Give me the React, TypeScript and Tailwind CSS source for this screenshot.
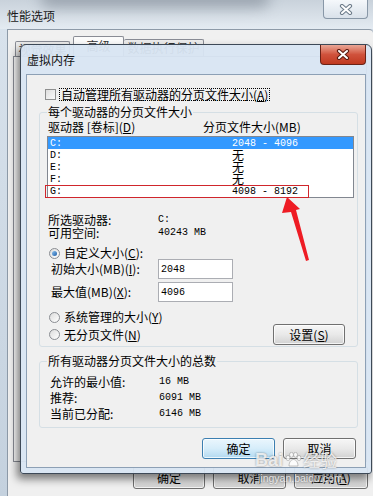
import React from 'react';

const mono = "font-['Liberation_Mono',monospace] text-[10px]";

const CloseX: React.FC<{ outline: string }> = ({ outline }) => (
  <svg width="14" height="11" viewBox="0 0 14 11">
    <path d="M3 2 L11 9 M11 2 L3 9" stroke={outline} strokeWidth="4.2" strokeLinecap="round" fill="none" />
    <path d="M3 2 L11 9 M11 2 L3 9" stroke="#ffffff" strokeWidth="2" strokeLinecap="round" fill="none" />
  </svg>
);

const Radio: React.FC<{ checked?: boolean }> = ({ checked }) => (
  <span className="w-[11px] h-[11px] rounded-full border border-[#8a8d92] bg-linear-to-br from-[#dcdcdc] to-[#ffffff] flex items-center justify-center shrink-0">
    {checked && <span className="w-[5px] h-[5px] rounded-full bg-linear-to-br from-[#8cc3f0] to-[#1c5ea8]" />}
  </span>
);

const Btn: React.FC<{ label: React.ReactNode; def?: boolean; className?: string }> = ({ label, def, className }) => (
  <div
    className={`flex items-center justify-center rounded-[3px] border shadow-[inset_0_0_0_1px_rgba(255,255,255,0.75)] ${
      def
        ? 'border-[#3c7fb1] bg-linear-to-b from-[#eaf6fd] via-[#d6edfa] to-[#b2d9f0]'
        : 'border-[#707070] bg-linear-to-b from-[#f6f6f6] via-[#e9e9e9] to-[#d2d2d2]'
    } ${className ?? ''}`}
  >
    <span className="leading-[12px]">{label}</span>
  </div>
);

const Group: React.FC<{ title: string; className?: string; children: React.ReactNode }> = ({ title, className, children }) => (
  <div className={`flex flex-col border border-[#d5dfe5] rounded-[3px] ${className ?? ''}`}>
    <span className="-mt-[7px] ml-[7px] px-[1px] self-start bg-[#f0f0f0] leading-[12px]">{title}</span>
    {children}
  </div>
);

const drives = [
  { d: 'C:', v: '2048 - 4096', sel: true },
  { d: 'D:', v: '无' },
  { d: 'E:', v: '无' },
  { d: 'F:', v: '无' },
  { d: 'G:', v: '4098 - 8192' },
];

export default function App() {
  return (
    <div className="relative w-[373px] h-[496px] overflow-hidden bg-[#d2dce7] text-[12px] text-black font-['Noto_Sans_CJK_SC',sans-serif]">
      {/* outer window: 性能选项 */}
      <div className="flex flex-col h-full">
        <div className="relative h-[29px] flex justify-between items-start bg-linear-to-b from-[#c9d2db] to-[#e4ebf2] overflow-hidden">
          <div className="absolute left-[40px] -top-[12px] w-[230px] h-[20px] rounded-full bg-[#7e8894] opacity-60 blur-[7px]" />
          <span className="relative mt-[9px] ml-[7px] text-[12px] leading-[13px] text-[#1a1a1a]">性能选项</span>
          <div className="relative mr-[5px] w-[45px] h-[19px] flex items-center justify-center rounded-b-[4px] border border-t-0 border-[#8897a7] bg-linear-to-b from-[#f5f8fb] to-[#d9e1ea]">
            <CloseX outline="#6f7d8c" />
          </div>
        </div>
        <div className="flex-1 flex">
          <div className="w-[7px] bg-linear-to-b from-[#d8e2ec] to-[#c4d1de]" />
          <div className="flex-1 flex flex-col bg-[#f0f0f0] border-l border-t border-[#8d9aa8] rounded-tr-[4px]">
            <div className="h-[26px] flex items-end pl-[7px] text-[#333]">
              <div className="w-[55px] h-[15px] pt-[2px] border border-b-0 border-[#898c95] rounded-t-[2px] bg-[#ececec] text-center leading-[11px]">视觉效果</div>
              <div className="ml-[3px] w-[51px] h-[20px] pt-[3px] border border-b-0 border-[#898c95] rounded-t-[2px] bg-[#fbfbfb] text-center leading-[11px]">高级</div>
              <div className="w-[80px] h-[17px] pt-[2px] border border-b-0 border-l-0 border-[#898c95] rounded-t-[2px] bg-[#ececec] text-center leading-[11px]">数据执行保护</div>
            </div>
            <div className="ml-[5px] mr-[6px] h-[406px] border border-[#898c95] bg-[#fafafa]" />
            <div className="mt-[4px] flex justify-end gap-[8px] pr-[5px]">
              <Btn label="确定" className="w-[72px] h-[23px]" />
              <Btn label="取消" className="w-[73px] h-[23px]" />
              <Btn label={<>应用(<u>A</u>)</>} className="w-[74px] h-[23px]" />
            </div>
          </div>
        </div>
      </div>

      {/* dialog: 虚拟内存 */}
      <div className="absolute left-[20px] top-[44px] w-[352px] h-[430px] flex flex-col rounded-t-[6px] rounded-b-[3px] border border-[#3d4957] bg-[#d8e5f2]/95 shadow-[-3px_5px_9px_rgba(0,0,0,0.5)]">
        <div className="h-[29px] flex justify-between items-start">
          <span className="mt-[8px] ml-[6px] text-[12px] leading-[13px] text-[#111]">虚拟内存</span>
          <div className="mr-[5px] w-[46px] h-[20px] flex items-center justify-center rounded-b-[4px] border border-t-0 border-[#6a2216] bg-linear-to-b from-[#e9a696] via-[#d0523c] to-[#c0391f]">
            <CloseX outline="#5a1c12" />
          </div>
        </div>
        <div className="mx-[5px] h-[394px] flex flex-col border border-[#8da0b5] bg-[#f0f0f0]">
          {/* checkbox */}
          <div className="mt-[13px] ml-[18px] h-[12px] flex items-center">
            <span className="w-[11px] h-[11px] border border-[#8e8f8f] bg-linear-to-br from-[#dedede] to-[#fafafa]" />
            <span className="ml-[3px] px-[1px] border border-dotted border-black leading-[11px]">
              自动管理所有驱动器的分页文件大小(<u>A</u>)
            </span>
          </div>

          <Group title="每个驱动器的分页文件大小" className="mt-[12px] ml-[12px] w-[319px] h-[235px]">
            <div className="mt-[3px] pl-[8px] flex leading-[12px]">
              <span className="w-[155px]">驱动器 [卷标](<u>D</u>)</span>
              <span>分页文件大小(MB)</span>
            </div>
            <div className="relative mt-[3px] ml-[7px] w-[307px] h-[62px] border border-[#828790] bg-white">
              {drives.map((r) => (
                <div
                  key={r.d}
                  className={`h-[12px] flex items-center pl-[2px] ${r.sel ? 'bg-[#3399ff] text-white' : ''}`}
                >
                  <span className={`w-[182px] ${mono}`}>{r.d}</span>
                  <span className={r.v === '无' ? 'leading-[12px]' : mono}>{r.v}</span>
                </div>
              ))}
              <div className="absolute -left-[3px] top-[48px] w-[264px] h-[13px] border border-[#d0262c]" />
            </div>

            <div className="mt-[16px] pl-[8px] flex leading-[12px]">
              <span className="w-[110px]">所选驱动器:</span>
              <span className={mono}>C:</span>
            </div>
            <div className="mt-[1px] pl-[8px] flex leading-[12px]">
              <span className="w-[110px]">可用空间:</span>
              <span className={mono}>40243 MB</span>
            </div>

            <div className="mt-[8px] pl-[9px] h-[12px] flex items-center">
              <Radio checked />
              <span className="ml-[4px] leading-[12px]">自定义大小(<u>C</u>):</span>
            </div>
            <div className="pl-[11px] h-[20px] flex items-center">
              <span className="w-[107px] leading-[12px]">初始大小(MB)(<u>I</u>):</span>
              <div className="w-[75px] h-[20px] flex items-center pl-[2px] border border-[#abadb3] bg-white">
                <span className={mono}>2048</span>
              </div>
            </div>
            <div className="mt-[3px] pl-[11px] h-[20px] flex items-center">
              <span className="w-[107px] leading-[12px]">最大值(MB)(<u>X</u>):</span>
              <div className="w-[75px] h-[20px] flex items-center pl-[2px] border border-[#abadb3] bg-white">
                <span className={mono}>4096</span>
              </div>
            </div>

            <div className="mt-[9px] pl-[9px] h-[12px] flex items-center">
              <Radio />
              <span className="ml-[4px] leading-[12px]">系统管理的大小(<u>Y</u>)</span>
            </div>
            <div className="mt-[1px] pl-[9px] pr-[12px] h-[21px] flex items-center">
              <Radio />
              <span className="ml-[4px] leading-[12px]">无分页文件(<u>N</u>)</span>
              <Btn label={<>设置(<u>S</u>)</>} className="ml-auto w-[72px] h-[21px]" />
            </div>
          </Group>

          <Group title="所有驱动器分页文件大小的总数" className="mt-[14px] ml-[12px] w-[319px] h-[67px]">
            {[
              ['允许的最小值:', '16 MB'],
              ['推荐:', '6091 MB'],
              ['当前已分配:', '6146 MB'],
            ].map(([k, v], i) => (
              <div key={k} className={`pl-[10px] flex leading-[12px] ${i === 0 ? 'mt-[9px]' : 'mt-[4px]'}`}>
                <span className="w-[109px]">{k}</span>
                <span className={mono}>{v}</span>
              </div>
            ))}
          </Group>

          <div className="mt-[10px] pr-[9px] flex justify-end gap-[8px]">
            <Btn label="确定" def className="w-[73px] h-[21px]" />
            <Btn label="取消" className="w-[73px] h-[21px]" />
          </div>
        </div>
      </div>

      {/* red annotation arrow */}
      <svg className="absolute left-0 top-0 pointer-events-none" width="373" height="496">
        <polygon points="287,197 300,209 296,210 309,260 306,261 291,212 282,213" fill="#ee1c24" />
      </svg>

      {/* watermark */}
      <div className="absolute left-[255px] top-[451px] flex items-center text-white/80 [text-shadow:0_0_2px_rgba(0,0,0,0.45)] pointer-events-none">
        <span className="font-['Liberation_Sans',sans-serif] font-bold text-[18px] leading-[18px]">Bai</span>
        <svg width="18" height="16" viewBox="0 0 18 16" className="mx-[1px] opacity-80">
          <ellipse cx="4" cy="6" rx="2" ry="2.6" fill="#ffffff" stroke="#888" strokeWidth="0.6" />
          <ellipse cx="7.5" cy="2.8" rx="2" ry="2.5" fill="#ffffff" stroke="#888" strokeWidth="0.6" />
          <ellipse cx="11.5" cy="2.8" rx="2" ry="2.5" fill="#ffffff" stroke="#888" strokeWidth="0.6" />
          <ellipse cx="15" cy="6" rx="2" ry="2.6" fill="#ffffff" stroke="#888" strokeWidth="0.6" />
          <path d="M5 14 C5 9 8 7.5 9.5 7.5 C11 7.5 14 9 14 14 Z" fill="#ffffff" stroke="#888" strokeWidth="0.6" />
        </svg>
        <span className="text-[17px] leading-[18px]">经验</span>
      </div>
      <div className="absolute left-[258px] top-[472px] text-white/80 font-['Liberation_Sans',sans-serif] text-[10.5px] leading-[12px] [text-shadow:0_0_2px_rgba(0,0,0,0.5)] pointer-events-none">
        jingyan.baidu.com
      </div>
    </div>
  );
}
